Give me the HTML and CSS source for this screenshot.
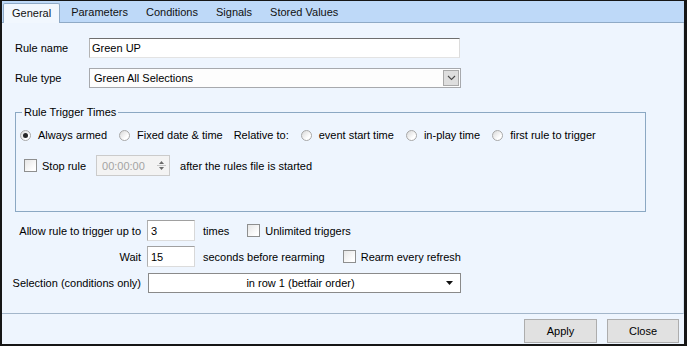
FILE: index.html
```html
<!DOCTYPE html>
<html lang="en">
<head>
    <meta charset="UTF-8">
    <title>Rule Editor</title>
    <link rel="stylesheet" href="styles.css">
</head>
<body>

    <div class="window">
        <div class="tab-strip">
            <div class="tab active">General</div>
            <div class="tab">Parameters</div>
            <div class="tab">Conditions</div>
            <div class="tab">Signals</div>
            <div class="tab">Stored Values</div>
        </div>

        <div class="panel">
            <div class="top-section">
                <div class="top-row">
                    <span class="top-label">Rule name</span>
                    <div class="textbox name-box">Green UP</div>
                </div>
                <div class="top-row type-row">
                    <span class="top-label">Rule type</span>
                    <div class="combo type-combo">
                        <span class="combo-text">Green All Selections</span>
                        <span class="combo-btn">
                            <svg width="9" height="6" viewBox="0 0 9 6"><path d="M1 1 L4.5 4.5 L8 1" fill="none" stroke="#4a4a4a" stroke-width="1.1"/></svg>
                        </span>
                    </div>
                </div>
            </div>

            <fieldset class="group">
                <legend>Rule Trigger Times</legend>
                <div class="radio-row">
                    <label class="opt"><span class="radio checked"></span>Always armed</label>
                    <label class="opt"><span class="radio"></span>Fixed date &amp; time</label>
                    <span class="opt">Relative to:</span>
                    <label class="opt"><span class="radio"></span>event start time</label>
                    <label class="opt"><span class="radio"></span>in-play time</label>
                    <label class="opt"><span class="radio"></span>first rule to trigger</label>
                </div>
                <div class="stop-row">
                    <label class="opt"><span class="check"></span>Stop rule</label>
                    <div class="spinner">
                        <span class="spin-text">00:00:00</span>
                        <span class="spin-btns">
                            <svg width="11" height="15" viewBox="0 0 11 15"><path d="M3 6 L5.5 3 L8 6 Z" fill="#6a6a6a"/><path d="M1 7.5 H10" stroke="#c4c4c4" stroke-width="1"/><path d="M3 9 L5.5 12 L8 9 Z" fill="#6a6a6a"/></svg>
                        </span>
                    </div>
                    <span class="after-text">after the rules file is started</span>
                </div>
            </fieldset>

            <div class="lower">
                <div class="field-row allow-row">
                    <span class="field-label">Allow rule to trigger up to</span>
                    <div class="textbox small-box">3</div>
                    <span class="unit">times</span>
                    <label class="opt"><span class="check"></span>Unlimited triggers</label>
                </div>
                <div class="field-row wait-row">
                    <span class="field-label">Wait</span>
                    <div class="textbox small-box">15</div>
                    <span class="unit">seconds before rearming</span>
                    <label class="opt"><span class="check"></span>Rearm every refresh</label>
                </div>
                <div class="field-row select-row">
                    <span class="field-label">Selection (conditions only)</span>
                    <div class="combo select-combo">
                        <span class="select-text">in row 1 (betfair order)</span>
                        <svg class="select-arrow" width="7" height="4" viewBox="0 0 7 4"><path d="M0 0 H7 L3.5 4 Z" fill="#111"/></svg>
                    </div>
                </div>
            </div>
        </div>

        <div class="footer">
            <button class="btn apply">Apply</button>
            <button class="btn close">Close</button>
        </div>
    </div>

</body>
</html>
```

FILE: styles.css
```css
body {
    margin: 0;
    font-family: "Liberation Sans", Arial, sans-serif;
    font-size: 11px;
    color: #000;
    background-color: #fff;
}
.window {
    width: 687px;
    height: 346px;
    box-sizing: border-box;
    border-style: solid;
    border-color: #161616;
    border-width: 1px 3px 2px 2px;
    background-color: #eef5fe;
    display: flex;
    flex-direction: column;
}
.tab-strip {
    height: 21px;
    background-color: #bed9f8;
    border-bottom: 1px solid #8faac6;
    display: flex;
    align-items: flex-end;
    padding-left: 1px;
}
.tab {
    height: 19px;
    line-height: 19px;
    padding: 0 9px;
    white-space: nowrap;
    color: #111;
}
.tab.active {
    height: 19px;
    padding: 0 8px;
    background-color: #f1f7fe;
    border: 1px solid #8faac6;
    border-bottom: none;
    border-radius: 2px 2px 0 0;
    margin-bottom: -1px;
    margin-right: 2px;
}
.panel {
    flex: 1;
    border-bottom: 1px solid #a3b6ca;
    border-right: 1px solid #d3e0ec;
    padding-top: 15px;
}
.top-section {
    padding-left: 13px;
}
.top-row {
    display: flex;
    align-items: center;
}
.type-row {
    margin-top: 10px;
}
.top-label {
    width: 74px;
}
.textbox {
    background-color: #fff;
    box-sizing: border-box;
    border: 1px solid;
    border-color: #6e6e6e #dcdcdc #e3e3e3 #b4b4b4;
    padding-left: 2px;
    display: flex;
    align-items: center;
}
.name-box {
    width: 371px;
    height: 20px;
}
.combo {
    box-sizing: border-box;
    background-color: #fdfdfd;
    border: 1px solid #a7a9ad;
    display: flex;
    align-items: center;
}
.type-combo {
    width: 372px;
    height: 20px;
}
.combo-text {
    flex: 1;
    padding-left: 4px;
}
.combo-btn {
    width: 16px;
    height: 16px;
    margin-right: 1px;
    box-sizing: border-box;
    background-color: #dedede;
    border: 1px solid #a9a9a9;
    display: flex;
    align-items: center;
    justify-content: center;
}
.group {
    margin: 17px 0 0 13px;
    width: 631px;
    box-sizing: border-box;
    padding: 0 0 35px 0;
    border: 1px solid #8ba8c3;
    min-inline-size: 0;
}
.group legend {
    padding: 0 2px;
    margin-left: 6px;
    line-height: 14px;
}
.radio-row {
    display: flex;
    align-items: center;
    height: 16px;
    margin-top: 8px;
    padding-left: 3px;
    gap: 11px;
}
.opt {
    display: flex;
    align-items: center;
    white-space: nowrap;
}
.radio {
    width: 11px;
    height: 11px;
    box-sizing: border-box;
    border: 1px solid #a8a8a8;
    border-radius: 50%;
    background: linear-gradient(135deg, #d8d8d8, #ffffff 70%);
    margin-right: 7px;
    margin-left: 1px;
    position: relative;
}
.radio.checked::after {
    content: "";
    position: absolute;
    left: 2px;
    top: 2px;
    width: 5px;
    height: 5px;
    border-radius: 50%;
    background-color: #262626;
}
.check {
    width: 13px;
    height: 13px;
    box-sizing: border-box;
    border: 1px solid #8e8f8f;
    background: linear-gradient(135deg, #e6e6e6, #ffffff 80%);
    margin-right: 5px;
}
.stop-row {
    display: flex;
    align-items: center;
    height: 21px;
    margin-top: 12px;
    padding-left: 8px;
}
.spinner {
    width: 74px;
    height: 21px;
    box-sizing: border-box;
    margin-left: 10px;
    border: 1px solid #cbcbcb;
    background-color: #f3f3f3;
    display: flex;
    align-items: center;
}
.spin-text {
    flex: 1;
    padding-left: 5px;
    color: #a3a3a3;
}
.spin-btns {
    display: flex;
    margin-right: 2px;
}
.after-text {
    margin-left: 10px;
}
.lower {
    margin-top: 8px;
}
.field-row {
    display: flex;
    align-items: center;
}
.field-label {
    width: 139px;
    text-align: right;
    margin-right: 6px;
    white-space: nowrap;
}
.small-box {
    width: 48px;
    height: 21px;
    border-color: #a0a0a0 #d8d8d8 #dcdcdc #b0b0b0;
    padding-left: 3px;
}
.unit {
    margin-left: 8px;
    margin-right: 18px;
}
.wait-row {
    margin-top: 5px;
}
.select-row {
    margin-top: 6px;
}
.select-combo {
    width: 313px;
    height: 20px;
    margin-left: 1px;
    background-color: #fff;
    border-color: #8a8a8a;
}
.select-text {
    flex: 1;
    text-align: center;
    padding-left: 6px;
}
.select-arrow {
    margin-right: 7px;
}
.footer {
    height: 30px;
    display: flex;
    justify-content: flex-end;
    align-items: flex-start;
    gap: 10px;
    padding: 5px 5px 0 0;
    box-sizing: border-box;
}
.btn {
    height: 24px;
    font-family: "Liberation Sans", Arial, sans-serif;
    font-size: 11px;
    color: #000;
    background-color: #e1e1e1;
    border: 1px solid #adadad;
    padding: 0;
}
.apply {
    width: 73px;
}
.close {
    width: 72px;
}
```
